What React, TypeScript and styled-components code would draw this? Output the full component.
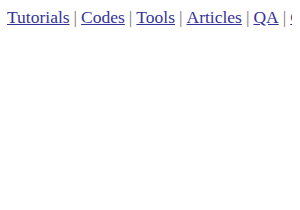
import React from 'react'
import styled, { createGlobalStyle } from 'styled-components'

const Global = createGlobalStyle`
  body {
    margin: 8px 8px 8px 7px;
    background: #fff;
    font-family: "Liberation Serif", "Times New Roman", serif;
    font-size: 17.5px;
  }
`

const Nav = styled.nav`
  white-space: nowrap;
  overflow: hidden;
  line-height: 1.1;
`

const NavLink = styled.a`
  color: #333399;
  text-decoration: underline;
`

const Sep = styled.span`
  color: #777;
  margin: 0 4px;
`

const links = ['Tutorials', 'Codes', 'Tools', 'Articles', 'QA', 'Contact']

const App = () => {
  return (
    <>
      <Global />
      <Nav>
        {links.map((l, i) => (
          <React.Fragment key={l}>
            {i > 0 && <Sep>|</Sep>}
            <NavLink href="#">{l}</NavLink>
          </React.Fragment>
        ))}
      </Nav>
    </>
  )
}

export default App
